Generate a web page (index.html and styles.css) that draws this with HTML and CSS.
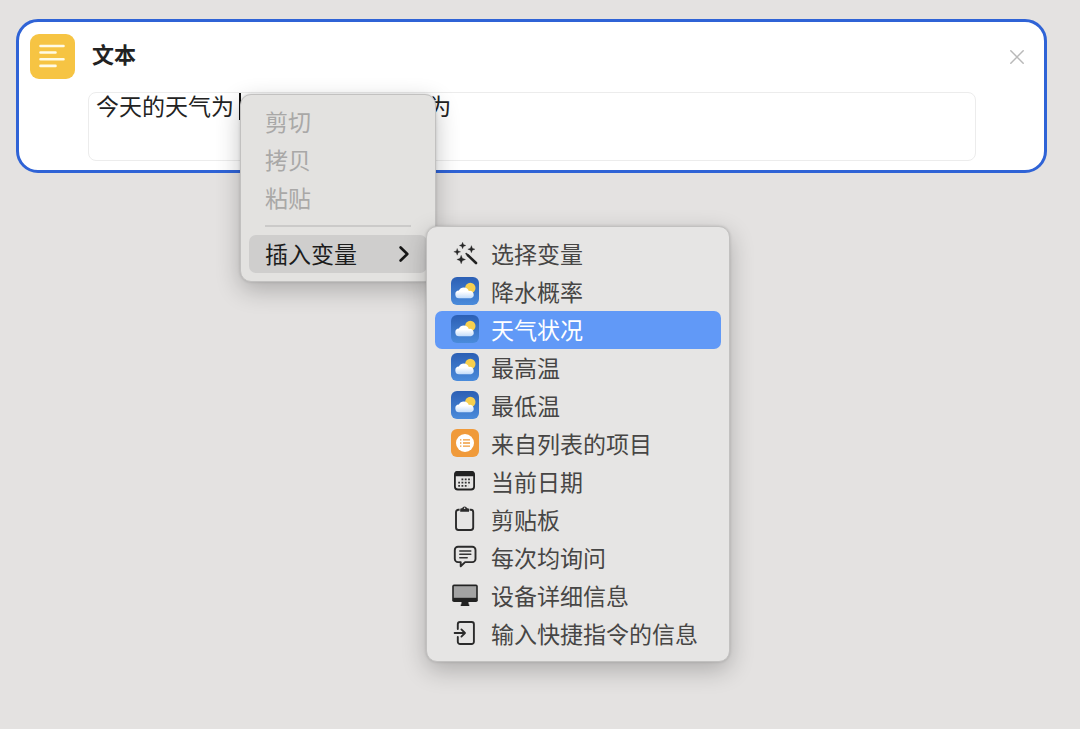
FILE: index.html
```html
<!DOCTYPE html>
<html lang="zh-CN">
<head>
<meta charset="utf-8">
<meta name="viewport" content="width=device-width, initial-scale=1">
<title>文本</title>
<link rel="stylesheet" href="styles.css">
</head>
<body>
<svg class="defs" width="0" height="0" aria-hidden="true">
  <defs>
    <linearGradient id="sky" x1="0" y1="0" x2="0" y2="1"><stop offset="0" stop-color="#2c5fb4"/><stop offset="1" stop-color="#4a8bdb"/></linearGradient>
    <linearGradient id="cloud" x1="0" y1="0" x2="0" y2="1"><stop offset="0.4" stop-color="#ffffff"/><stop offset="1" stop-color="#c3dcfa"/></linearGradient>
    <symbol id="weather" viewBox="0 0 28 28">
      <rect width="28" height="28" rx="6" fill="url(#sky)"/>
      <circle cx="19.3" cy="11" r="5.2" fill="#f7cf4e"/>
      <path d="M8.4 21.2a3.8 3.8 0 0 1-.5-7.6 5.3 5.3 0 0 1 9.9.4 3.7 3.7 0 0 1 2.2 7.2z" fill="url(#cloud)"/>
    </symbol>
  </defs>
</svg>
<main class="card">
  <header class="card-header">
    <svg class="card-icon" viewBox="0 0 45 45" aria-hidden="true">
      <rect width="45" height="45" rx="9" fill="#f6c443"/>
      <path d="M10.5 12h23M10.5 18.5h15M10.5 25.2h23M10.5 31.9h15" stroke="#fffbe6" stroke-width="2.6" stroke-linecap="round"/>
    </svg>
    <h1 class="card-title"><label for="text">文本</label></h1>
    <button class="close" type="button" aria-label="关闭">
      <svg viewBox="0 0 14 14"><path d="M.8.8l12.4 12.4M13.2.8L.8 13.2" stroke="#b9b9b9" stroke-width="1.5" stroke-linecap="round"/></svg>
    </button>
  </header>
  <div class="editor">
    <textarea class="text" id="text" spellcheck="false">今天的天气为 　　　　　　　　 为</textarea>
    <span class="caret"></span>
    <div class="menu context-menu" role="menu">
      <button class="item" type="button" role="menuitem" disabled>剪切</button>
      <button class="item" type="button" role="menuitem" disabled>拷贝</button>
      <button class="item" type="button" role="menuitem" disabled>粘贴</button>
      <hr class="separator">
      <button class="item item-open" type="button" role="menuitem" aria-haspopup="menu" aria-expanded="true">
        插入变量
        <svg class="chevron" viewBox="0 0 10 16" aria-hidden="true"><path d="M1.6 2.5L8.3 9l-6.7 6.5" fill="none" stroke="#161616" stroke-width="2.6" stroke-linecap="round" stroke-linejoin="round"/></svg>
      </button>
      <div class="menu submenu" role="menu">
        <button class="item" type="button" role="menuitem">
          <svg class="icon" viewBox="-1 -1 28 28"><path d="M14.3 13.7l2.4 2.4" stroke="#333" stroke-width="1.8" stroke-linecap="round"/><path d="M16 15.4l8 7.6" stroke="#222" stroke-width="2.6" stroke-linecap="round"/><path d="M10.6 2.2l.9 2.4 2.4.9-2.4.9-.9 2.4-.9-2.4-2.4-.9 2.4-.9zM19.4 5.6l1 2.6 2.6 1-2.6 1-1 2.6-1-2.6-2.6-1 2.6-1zM5.2 8.4l.9 2.5 2.5.9-2.5.9-.9 2.5-.9-2.5-2.5-.9 2.5-.9zM9.2 15.2l1.2 3.1 3.1 1.2-3.1 1.2-1.2 3.1-1.2-3.1-3.1-1.2 3.1-1.2z" fill="#262626" stroke="#262626" stroke-width=".3"/></svg>
          选择变量
        </button>
        <button class="item" type="button" role="menuitem"><svg class="icon"><use href="#weather"/></svg>降水概率</button>
        <button class="item item-selected" type="button" role="menuitem"><svg class="icon"><use href="#weather"/></svg>天气状况</button>
        <button class="item" type="button" role="menuitem"><svg class="icon"><use href="#weather"/></svg>最高温</button>
        <button class="item" type="button" role="menuitem"><svg class="icon"><use href="#weather"/></svg>最低温</button>
        <button class="item" type="button" role="menuitem">
          <svg class="icon" viewBox="0 0 28 28"><rect width="28" height="28" rx="6" fill="#f09a3a"/><circle cx="14" cy="14" r="9" fill="#fff"/><path d="M12 10.9h7M12 14h7M12 17.1h7M9 10.9h1.4M9 14h1.4M9 17.1h1.4" stroke="#f09a3a" stroke-width="1.4"/></svg>
          来自列表的项目
        </button>
        <button class="item" type="button" role="menuitem">
          <svg class="icon" viewBox="0 0 28 28"><rect x="3.9" y="4.9" width="19.2" height="17.6" rx="3" fill="none" stroke="#222" stroke-width="1.8"/><path d="M3.5 9.3V7a3 3 0 0 1 3-3h14a3 3 0 0 1 3 3v2.3z" fill="#222"/><path d="M10.5 12.3h10M7.2 15.6h13M7.2 18.9h10" stroke="#333" stroke-width="1.8" stroke-dasharray="1.8 1.5"/></svg>
          当前日期
        </button>
        <button class="item" type="button" role="menuitem">
          <svg class="icon" viewBox="0 0 28 28"><path d="M8.6 4.8H7.4a2.4 2.4 0 0 0-2.4 2.4v15.4a2.4 2.4 0 0 0 2.4 2.4h12.4a2.4 2.4 0 0 0 2.4-2.4V7.2a2.4 2.4 0 0 0-2.4-2.4h-1.2" fill="none" stroke="#2b2b2b" stroke-width="1.9"/><path d="M9.2 6.8V4.6q0-1.3 1.3-1.3h.6a2.6 2.6 0 0 1 5 0h.6q1.3 0 1.3 1.3v2.2z" fill="#2b2b2b"/><circle cx="13.6" cy="3.3" r=".8" fill="#e6e5e4"/></svg>
          剪贴板
        </button>
        <button class="item" type="button" role="menuitem">
          <svg class="icon" viewBox="0 0 28 28"><path d="M7 3.7h14.3a3.2 3.2 0 0 1 3.2 3.2v9a3.2 3.2 0 0 1-3.2 3.2h-7.2l-4.4 4.2v-4.2H7a3.2 3.2 0 0 1-3.2-3.2v-9A3.2 3.2 0 0 1 7 3.7z" fill="none" stroke="#2b2b2b" stroke-width="1.9" stroke-linejoin="round"/><path d="M8.8 7.9h11M8.8 11.3h11M8.8 14.7h7.4" stroke="#333" stroke-width="1.5" stroke-linecap="round"/></svg>
          每次均询问
        </button>
        <button class="item" type="button" role="menuitem">
          <svg class="icon" viewBox="0 0 28 28"><rect x="1.2" y="3.6" width="25.6" height="17.4" rx="1.8" fill="#222"/><path d="M2.8 5.2h22.4v11.6H2.8z" fill="#a3a3a3"/><path d="M10.7 20h6.6l.4 3.5h.6v1.6H9.7v-1.6h.6z" fill="#222"/></svg>
          设备详细信息
        </button>
        <button class="item" type="button" role="menuitem">
          <svg class="icon" viewBox="0 0 28 28"><path d="M6.8 10V5.3a2.3 2.3 0 0 1 2.3-2.3h11.5a2.3 2.3 0 0 1 2.3 2.3v17.4a2.3 2.3 0 0 1-2.3 2.3H9.1a2.3 2.3 0 0 1-2.3-2.3V18" fill="none" stroke="#2b2b2b" stroke-width="1.9" stroke-linecap="round"/><path d="M3.6 14h10.2M10.4 10.4L14 14l-3.6 3.6" fill="none" stroke="#2b2b2b" stroke-width="1.8" stroke-linecap="round" stroke-linejoin="round"/></svg>
          输入快捷指令的信息
        </button>
      </div>
    </div>
  </div>
</main>
</body>
</html>
```
FILE: styles.css
```css
* {
  box-sizing: border-box;
}

body {
  min-height: 100vh;
  margin: 0;
  padding: 19px 33px 19px 16px;
  background: #e4e2e1;
  color: #222;
  font-family: "Noto Sans CJK SC", "Noto Sans", sans-serif;
  font-size: 23px;
  line-height: 30px;
}

button,
textarea {
  font: inherit;
  color: inherit;
}

.defs {
  position: absolute;
}

.card {
  padding: 12px 20px 9px 11px;
  border: 3px solid #2f63d6;
  border-radius: 22px;
  background: #fff;
}

.card-header {
  display: flex;
  align-items: center;
  gap: 17px;
}

.card-icon {
  width: 45px;
  height: 45px;
}

.card-title {
  flex: 1;
  margin: 0;
  padding-bottom: 7px;
  font-size: 22px;
  font-weight: 700;
}

.close {
  display: flex;
  padding: 0;
  border: 0;
  background: none;
}

.close svg {
  width: 14px;
  height: 14px;
}

.editor {
  position: relative;
  margin: 13px 48px 0 58px;
}

.text {
  display: block;
  width: 100%;
  height: 69px;
  padding: 0 7px;
  border: 1px solid #ececec;
  border-radius: 8px;
  outline: 0;
  background: #fff;
  line-height: 24px;
  resize: none;
}

.caret {
  position: absolute;
  top: 1px;
  left: 151px;
  width: 2px;
  height: 27px;
  background: #111;
}

.menu {
  position: absolute;
  display: flex;
  flex-direction: column;
  padding: 8px;
  border: 1px solid #c2c1c0;
  border-radius: 11px;
  background: #e3e2e0;
  box-shadow: 0 8px 24px rgba(0, 0, 0, 0.24), 0 0 3px rgba(0, 0, 0, 0.15);
}

.context-menu {
  top: 2px;
  left: 152px;
  width: 196px;
}

.submenu {
  top: 131px;
  left: 185px;
  width: 304px;
  background: #e6e5e4;
}

.item {
  display: flex;
  align-items: center;
  height: 38px;
  padding: 0 18px 2px 16px;
  border: 0;
  border-radius: 7px;
  background: none;
  color: #1c1c1c;
  text-align: left;
  white-space: nowrap;
}

.item:disabled {
  color: #a9a8a7;
}

.item-open {
  justify-content: space-between;
  background: #cfcecd;
}

.chevron {
  width: 10px;
  height: 16px;
  overflow: visible;
}

.separator {
  width: calc(100% - 32px);
  height: 2px;
  margin: 8px 16px;
  border: 0;
  background: #cbcac9;
}

.submenu .item {
  gap: 12px;
  color: #474645;
}

.submenu .item-selected {
  background: #6199f7;
  color: #fff;
}

.icon {
  flex: none;
  width: 28px;
  height: 28px;
}
```
